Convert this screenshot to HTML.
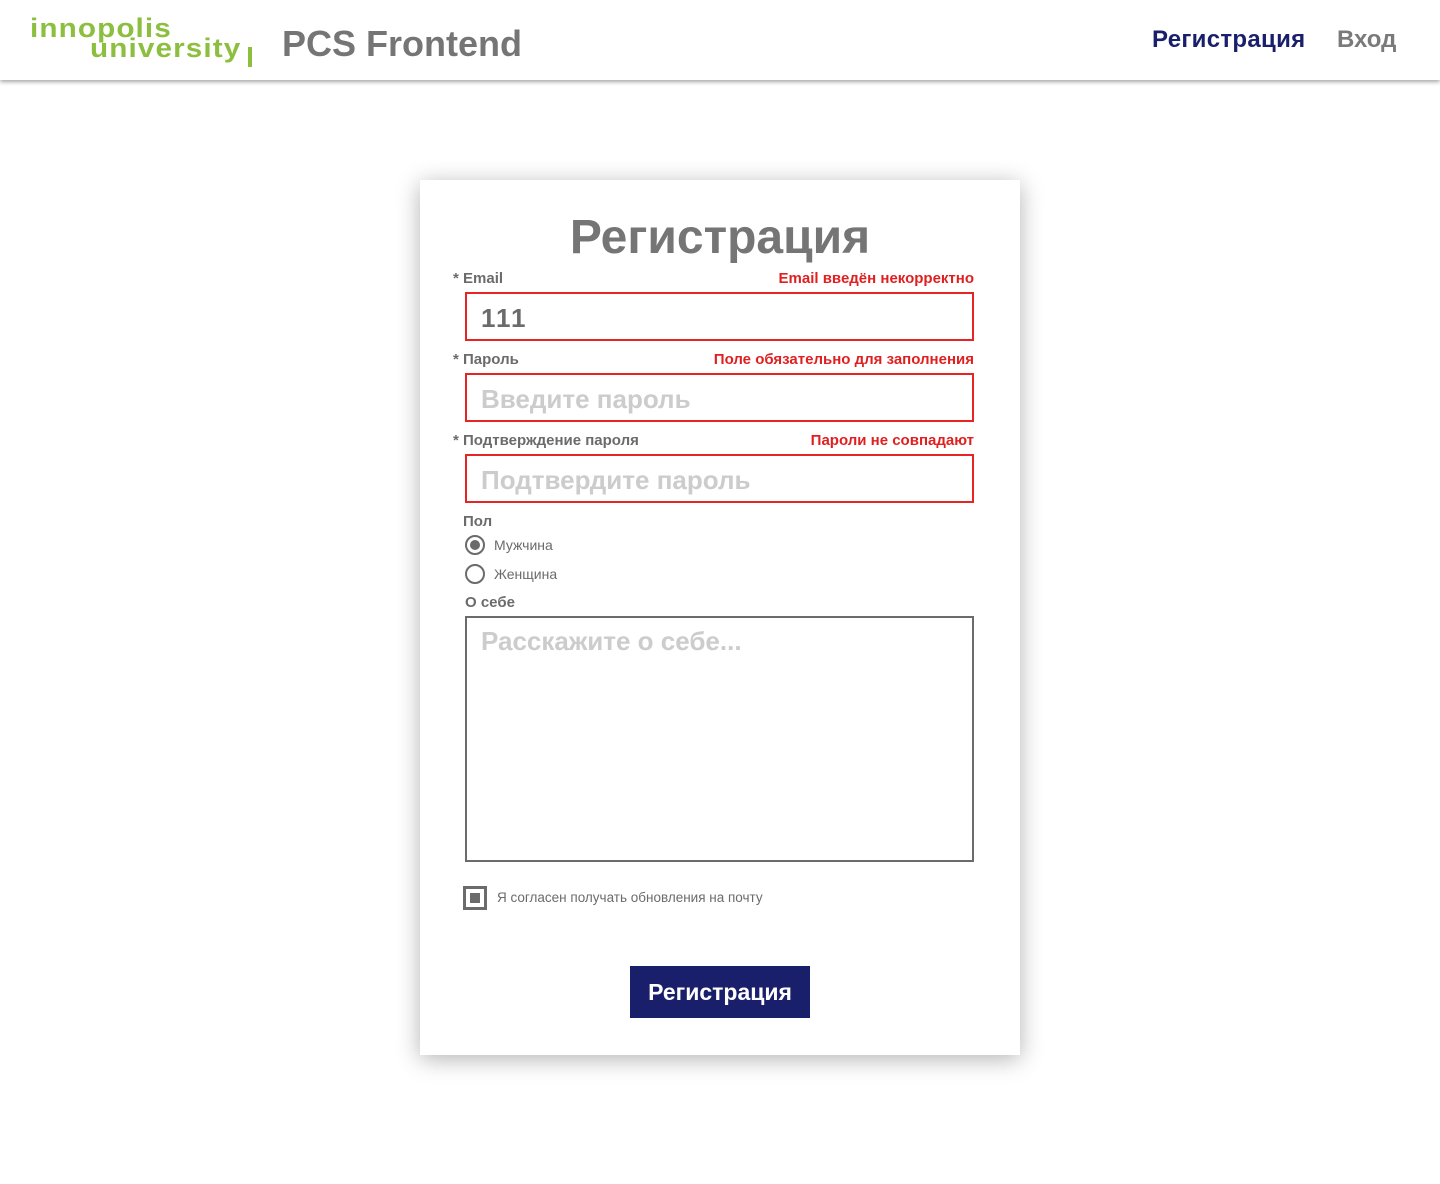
<!DOCTYPE html>
<html><head><meta charset="utf-8"><style>
body{margin:0;background:#fff;font-family:"Liberation Sans","Noto Sans CJK SC",sans-serif;width:1440px;height:1184px;position:relative;overflow:hidden}
.hdr{position:absolute;left:0;top:0;width:1440px;height:80px;background:#fff;box-shadow:0 2px 4px rgba(0,0,0,.35)}
.logo{position:absolute;color:#8cbf3f;font-size:27px;font-weight:bold;letter-spacing:1px;line-height:1;transform-origin:0 0;transform:scaleX(1.1)}
.t{position:absolute;font-weight:bold}
.card{position:absolute;left:420px;top:180px;width:600px;height:875px;background:#fff;box-shadow:0 4px 22px rgba(0,0,0,.3)}
.lbl{position:absolute;font-size:15px;font-weight:bold;color:#6b6b6b}
.err{position:absolute;font-size:15px;font-weight:bold;color:#e02020;right:46px}
.inp{position:absolute;left:45px;width:509px;height:45px;border:2px solid #e62424;box-sizing:border-box}
.inp span{position:absolute;left:14px;top:8px;font-size:26px;font-weight:bold;color:#ccc}
.radio{position:absolute;left:45px;width:16px;height:16px;border:2px solid #6b6b6b;border-radius:50%}
.rt{position:absolute;left:74px;font-size:14px;color:#6b6b6b}
</style></head><body>
<div class="hdr">
<div class="logo" style="left:30px;top:15px">innopolis</div>
<div class="logo" style="left:90px;top:35px">university</div>
<div style="position:absolute;left:248px;top:47px;width:4px;height:20px;background:#8cbf3f"></div>
<div class="t" style="left:282px;top:23px;font-size:36px;color:#757575">PCS Frontend</div>
<div class="t" style="left:1152px;top:26px;font-size:24px;color:#1a1f6b;letter-spacing:0.3px">Регистрация</div>
<div class="t" style="left:1337px;top:26px;font-size:24px;color:#7a7a7a">Вход</div>
</div>
<div class="card">
<div class="t" style="left:0;width:600px;text-align:center;top:30px;font-size:48px;color:#757575">Регистрация</div>
<div class="lbl" style="left:33px;top:90px">* Email</div>
<div class="err" style="top:90px">Email введён некорректно</div>
<div class="inp" style="top:112px;height:49px"><span style="color:#6b6b6b;top:9px;letter-spacing:2px">111</span></div>
<div class="lbl" style="left:33px;top:171px">* Пароль</div>
<div class="err" style="top:171px">Поле обязательно для заполнения</div>
<div class="inp" style="top:193px;height:49px"><span style="top:9px">Введите пароль</span></div>
<div class="lbl" style="left:33px;top:252px">* Подтверждение пароля</div>
<div class="err" style="top:252px">Пароли не совпадают</div>
<div class="inp" style="top:274px;height:49px"><span style="top:9px">Подтвердите пароль</span></div>
<div class="lbl" style="left:43px;top:333px">Пол</div>
<div class="radio" style="top:355px"><div style="position:absolute;left:3px;top:3px;width:10px;height:10px;border-radius:50%;background:#6b6b6b"></div></div>
<div class="rt" style="top:357px">Мужчина</div>
<div class="radio" style="top:384px"></div>
<div class="rt" style="top:386px">Женщина</div>
<div class="lbl" style="left:45px;top:414px">О себе</div>
<div style="position:absolute;left:45px;top:436px;width:509px;height:246px;border:2px solid #6b6b6b;box-sizing:border-box"><span style="position:absolute;left:14px;top:8px;font-size:26px;font-weight:bold;color:#ccc">Расскажите о себе...</span></div>
<div style="position:absolute;left:43px;top:706px;width:24px;height:24px;border:3px solid #6b6b6b;box-sizing:border-box"><div style="position:absolute;left:4px;top:4px;width:10px;height:10px;background:#6b6b6b"></div></div>
<div style="position:absolute;left:77px;top:710px;font-size:13.5px;color:#6b6b6b">Я согласен получать обновления на почту</div>
<div style="position:absolute;left:210px;top:786px;width:180px;height:52px;background:#1a1f6b;color:#fff;font-weight:bold;font-size:23px;text-align:center;line-height:52px">Регистрация</div>
</div>
</body></html>
